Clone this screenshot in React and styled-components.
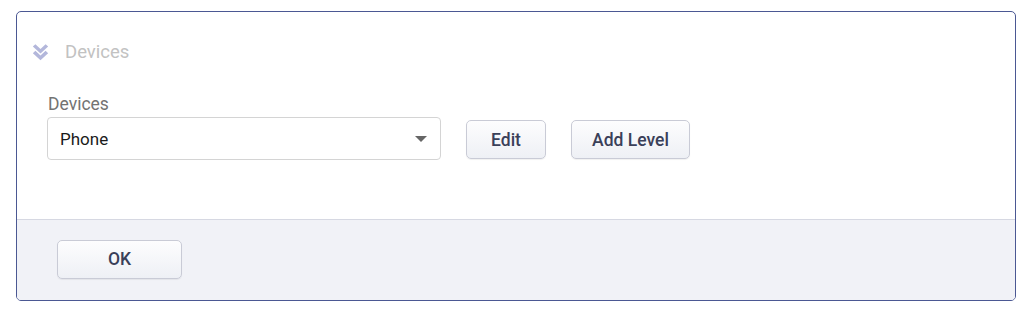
import React from "react";
import styled, { createGlobalStyle } from "styled-components";

const Global = createGlobalStyle`
  html, body { margin: 0; padding: 0; background: #ffffff; }
  body { font-family: Roboto, "Noto Sans", Arial, sans-serif; }
  * { box-sizing: border-box; }
`;

const Page = styled.div`
  padding: 11px 0 0 16px;
`;

const Panel = styled.div`
  width: 1000px;
  height: 290px;
  border: 1px solid #4b5893;
  border-radius: 5px;
  overflow: hidden;
  display: flex;
  flex-direction: column;
  background: #ffffff;
`;

const Body = styled.div`
  flex: 1;
  padding: 30px 15px 0 15px;
  border-bottom: 1px solid #d6d8e2;
`;

const Header = styled.div`
  display: flex;
  align-items: center;
  gap: 16px;
  height: 20px;
`;

const Title = styled.span`
  font-size: 18.5px;
  color: #c2c2c2;
  line-height: 20px;
`;

const Fields = styled.div`
  display: flex;
  align-items: flex-end;
  gap: 25px;
  padding: 32px 0 0 15px;
`;

const Field = styled.div`
  display: flex;
  flex-direction: column;
`;

const Label = styled.label`
  font-size: 17.5px;
  line-height: 20px;
  color: #737373;
  margin-bottom: 3px;
  padding-left: 1px;
`;

const Select = styled.div`
  width: 394px;
  height: 43px;
  border: 1px solid #d4d4d4;
  border-radius: 4px;
  display: flex;
  align-items: center;
  justify-content: space-between;
  padding: 0 12px 0 12px;
  font-size: 17px;
  color: #1a1a1a;
  background: #fff;
`;

const Caret = styled.span`
  width: 0;
  height: 0;
  border-left: 6px solid transparent;
  border-right: 6px solid transparent;
  border-top: 6px solid #666666;
  margin-right: 1px;
`;

const Button = styled.button`
  height: 39px;
  width: ${(p) => p.$w}px;
  margin-bottom: 1px;
  border: 1px solid #c9cbd6;
  border-radius: 5px;
  background: linear-gradient(#fdfdfe, #eef0f5);
  box-shadow: 0 1px 1px rgba(0, 0, 0, 0.06);
  font-family: Roboto, "Noto Sans", Arial, sans-serif;
  font-size: 17.5px;
  font-weight: 500;
  color: #3a4059;
  cursor: pointer;
  padding: 0;
`;

const Footer = styled.div`
  height: 80px;
  background: #f1f2f7;
  display: flex;
  align-items: center;
  padding: 0 0 1px 40px;
`;

const ChevronIcon = () => (
  <svg width="17" height="17" viewBox="0 0 16 16" aria-hidden="true">
    <path d="M0.8 2.4 L3.2 0.2 L8 4.6 L12.8 0.2 L15.2 2.4 L8 9 Z" fill="#b3b7db" />
    <path d="M0.8 8.6 L3.2 6.4 L8 10.8 L12.8 6.4 L15.2 8.6 L8 15.2 Z" fill="#b3b7db" />
  </svg>
);

export default function App() {
  return (
    <Page>
      <Global />
      <Panel>
        <Body>
          <Header>
            <ChevronIcon />
            <Title>Devices</Title>
          </Header>
          <Fields>
            <Field>
              <Label>Devices</Label>
              <Select>
                <span>Phone</span>
                <Caret />
              </Select>
            </Field>
            <Button $w={80}>Edit</Button>
            <Button $w={119}>Add Level</Button>
          </Fields>
        </Body>
        <Footer>
          <Button $w={125}>OK</Button>
        </Footer>
      </Panel>
    </Page>
  );
}
